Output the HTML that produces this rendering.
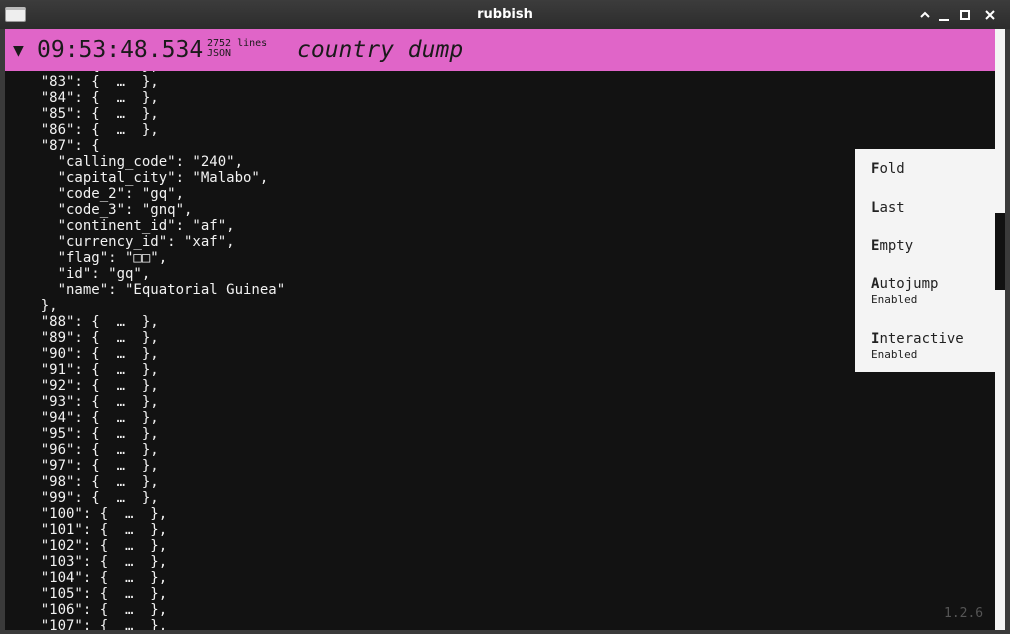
<!DOCTYPE html>
<html><head><meta charset="utf-8"><style>
*{margin:0;padding:0;box-sizing:border-box}
body{width:1010px;height:634px;background:#3a3a3a;overflow:hidden;position:relative;font-family:"DejaVu Sans Mono","Liberation Mono",monospace}
#tb{position:absolute;left:0;top:0;width:1010px;height:29px;background:linear-gradient(#3c3c3c,#2c2c2c);color:#fff}
#tb .t{position:absolute;left:0;width:1010px;top:7px;text-align:center;font:600 13px "DejaVu Sans",sans-serif}
#ic{position:absolute;left:5px;top:7px;width:21px;height:15px;background:#eee;border:1px solid #999;border-top:3px solid #bbb;border-radius:2px}
#main{position:absolute;left:5px;top:29px;width:990px;height:601px;background:#121212;overflow:hidden}
#hdr{position:absolute;left:0;top:0;width:990px;height:42px;background:#e065c8;color:#1a1a1a;z-index:2}
pre{position:absolute;left:2px;top:29px;color:#f2f2f2;font-size:14px;line-height:16px;font-family:"DejaVu Sans Mono",monospace}
#sb{position:absolute;left:995px;top:29px;width:10px;height:601px;background:#f4f4f4}
#th{position:absolute;left:995px;top:213px;width:10px;height:77px;background:#111}
#menu{position:absolute;left:855px;top:149px;width:140px;height:223px;background:#f4f4f4;color:#222;font-size:14px}
#menu div{position:absolute;left:16px}
#menu small{display:block;font-size:11px;margin-top:1px}
b{font-weight:bold}
</style></head><body>
<div id="tb"><div id="ic"></div><div class="t">rubbish</div>
<svg style="position:absolute;left:915px;top:7px" width="90" height="16" fill="none" stroke="#fff" stroke-width="2">
<path d="M6 10l4-4 4 4"/><path d="M24 13h10"/><rect x="46" y="4" width="8" height="8"/><path d="M71 4l8 8M79 4l-8 8"/></svg></div>
<div id="main">
<div id="hdr">
<span style="position:absolute;left:8px;top:11px;font-size:18px">▼</span>
<span style="position:absolute;left:32px;top:8px;font-size:23px">09:53:48.534</span>
<span style="position:absolute;left:202px;top:10px;font-size:10px;line-height:10px">2752 lines<br>JSON</span>
<span style="position:absolute;left:292px;top:8px;font-size:23px;font-style:italic">country dump</span>
</div>
<pre>
    "82": {  …  },
    "83": {  …  },
    "84": {  …  },
    "85": {  …  },
    "86": {  …  },
    "87": {
      "calling_code": "240",
      "capital_city": "Malabo",
      "code_2": "gq",
      "code_3": "gnq",
      "continent_id": "af",
      "currency_id": "xaf",
      "flag": "□□",
      "id": "gq",
      "name": "Equatorial Guinea"
    },
    "88": {  …  },
    "89": {  …  },
    "90": {  …  },
    "91": {  …  },
    "92": {  …  },
    "93": {  …  },
    "94": {  …  },
    "95": {  …  },
    "96": {  …  },
    "97": {  …  },
    "98": {  …  },
    "99": {  …  },
    "100": {  …  },
    "101": {  …  },
    "102": {  …  },
    "103": {  …  },
    "104": {  …  },
    "105": {  …  },
    "106": {  …  },
    "107": {  …  },
</pre>
<span style="position:absolute;left:939px;top:577px;color:#555;font-size:13px">1.2.6</span>
</div>
<div id="sb"></div><div id="th"></div>
<div id="menu">
<div style="top:12px"><b>F</b>old</div>
<div style="top:51px"><b>L</b>ast</div>
<div style="top:89px"><b>E</b>mpty</div>
<div style="top:127px"><b>A</b>utojump<small>Enabled</small></div>
<div style="top:182px"><b>I</b>nteractive<small>Enabled</small></div>
</div>
</body></html>
